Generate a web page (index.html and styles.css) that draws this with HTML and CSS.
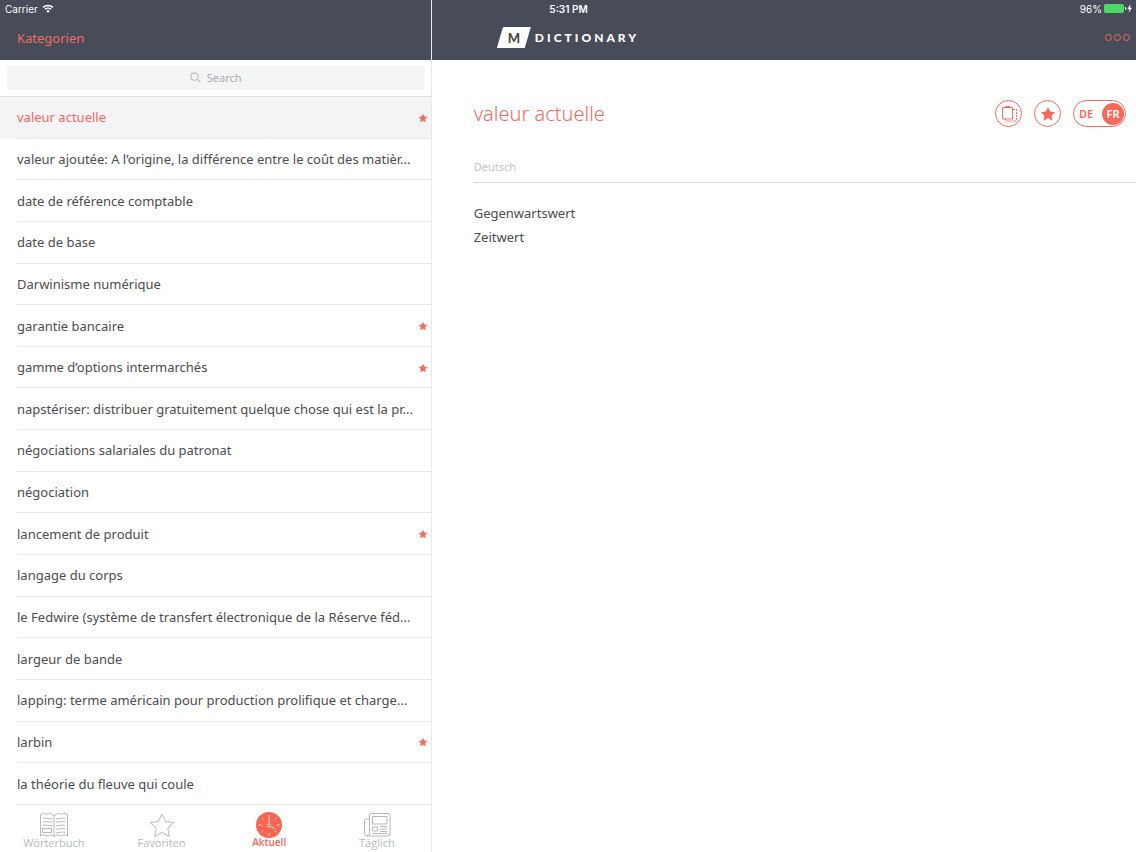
FILE: index.html
```html
<!DOCTYPE html>
<html lang="fr">
<head>
    <meta charset="UTF-8">
    <meta name="viewport" content="width=device-width, initial-scale=1.0">
    <title>M Dictionary</title>
    <link rel="stylesheet" href="styles.css">
</head>
<body>

    <!-- Shared star shape -->
    <svg class="defs" aria-hidden="true">
        <symbol id="star" viewBox="0 0 24 24">
            <path d="M12 1.5l3.2 6.900 7.500.9-5.500 5.200 1.400 7.500L12 18.300 5.400 22l1.400-7.500L1.300 9.300l7.500-.9z"/>
        </symbol>
    </svg>

    <div class="app">

        <!-- Sidebar -->
        <aside class="sidebar">
            <div class="pane-head"></div>
            <div class="search">
                <label class="search-box">
                    <svg class="search-icon" viewBox="0 0 12 12"><circle cx="5" cy="5" r="4.200"/><path d="M8 8l3.400 3.400"/></svg>
                    <input type="text" placeholder="Search" aria-label="Search">
                </label>
            </div>

            <ul class="words">
                <li class="active"><a href="#">valeur actuelle</a><svg class="fav"><use href="#star"/></svg></li>
                <li><a href="#">valeur ajoutée: A l’origine, la différence entre le coût des matièr...</a></li>
                <li><a href="#">date de référence comptable</a></li>
                <li><a href="#">date de base</a></li>
                <li><a href="#">Darwinisme numérique</a></li>
                <li><a href="#">garantie bancaire</a><svg class="fav"><use href="#star"/></svg></li>
                <li><a href="#">gamme d’options intermarchés</a><svg class="fav"><use href="#star"/></svg></li>
                <li><a href="#">napstériser: distribuer gratuitement quelque chose qui est la pr...</a></li>
                <li><a href="#">négociations salariales du patronat</a></li>
                <li><a href="#">négociation</a></li>
                <li><a href="#">lancement de produit</a><svg class="fav"><use href="#star"/></svg></li>
                <li><a href="#">langage du corps</a></li>
                <li><a href="#">le Fedwire (système de transfert électronique de la Réserve féd...</a></li>
                <li><a href="#">largeur de bande</a></li>
                <li><a href="#">lapping: terme américain pour production prolifique et charge...</a></li>
                <li><a href="#">larbin</a><svg class="fav"><use href="#star"/></svg></li>
                <li><a href="#">la théorie du fleuve qui coule</a></li>
            </ul>

            <!-- Tabs -->
            <nav class="tabs">
                <a href="#">
                    <svg viewBox="0 0 30 26">
                        <path d="M15 4C12.500 1 9.500 1 8 2.500 6 1 3.500 1 1.500 2.500V24c2-1.500 4.500-1.500 6.500 0 2-1.500 5-1.500 7 .5 2-2 5-2 7-.5 2-1.500 4.500-1.500 6.500 0V2.500c-2-1.500-4.500-1.500-6.500 0C20.500 1 17.500 1 15 4zM15 4v20.500"/>
                        <path d="M4 6.500c3-1.500 5 1 9 0M4 10c3-1.500 5 1 9 0M4 13.500c3-1.500 5 1 9 0M17 6.500c4 1 6-1.500 9 0M17 10c4 1 6-1.500 9 0M17 13.500c4 1 6-1.500 9 0M17 17c4 1 6-1.500 9 0M17 20.500c4 1 6-1.500 9 0M3.500 16.500h9v4h-9z"/>
                    </svg>
                    <span>Wörterbuch</span>
                </a>
                <a href="#">
                    <svg viewBox="0 0 30 26"><path d="M15 2l3.600 7.500 8.200 1-6 5.700 1.500 8.200L15 20.400l-7.300 4 1.500-8.200-6-5.700 8.200-1z"/></svg>
                    <span>Favoriten</span>
                </a>
                <a href="#" class="current">
                    <svg viewBox="0 0 30 26">
                        <circle class="face" cx="15" cy="13" r="13"/>
                        <path class="hand" d="M15 3v9M16.200 14.200l5.300 2.800"/>
                        <circle class="hand" cx="15" cy="13.500" r="1.500"/>
                        <path class="hand" d="M15 21v3M4.500 13h3M22.500 13h3M7.500 5.500l2 2M22.500 5.500l-2 2M7.500 20.500l2-2M22.500 20.500l-2-2"/>
                    </svg>
                    <span>Aktuell</span>
                </a>
                <a href="#">
                    <svg viewBox="0 0 30 26">
                        <path d="M7.500 21V3.500a2 2 0 0 1 2-2H26a2 2 0 0 1 2 2V22a2 2 0 0 1-2 2H5a2.500 2.500 0 0 1-2.500-2.500V9a2 2 0 0 1 2-2h3M7.500 20.500c0 2-1 3.500-2.500 3.500"/>
                        <path d="M10.500 4.500h14.500v7.500H10.500zM10.500 15h5v4h-5zM18 14.500h7M18 17h7M18 19.500h7M10.500 21.500H25"/>
                    </svg>
                    <span>Täglich</span>
                </a>
            </nav>
        </aside>

        <!-- Detail -->
        <main class="detail">
            <div class="pane-head"></div>
            <div class="entry-head">
                <h1>valeur actuelle</h1>
                <div class="actions">
                    <button class="round" aria-label="Copy">
                        <svg viewBox="0 0 25 25" class="copy-icon">
                            <path d="M6.500 6.500h10v11.500h-10zM9.500 6.500v-1h4v1"/>
                            <path class="dashed" d="M17 8.500h3.500v11.500H9.500v-2"/>
                        </svg>
                    </button>
                    <button class="round" aria-label="Favorite"><svg class="star-icon"><use href="#star"/></svg></button>
                    <div class="lang">
                        <button>DE</button>
                        <button class="on">FR</button>
                    </div>
                </div>
            </div>
            <section class="translation">
                <h2>Deutsch</h2>
                <p>Gegenwartswert</p>
                <p>Zeitwert</p>
            </section>
        </main>

        <!-- Status bar -->
        <div class="status">
            <span class="carrier">Carrier
                <svg class="wifi" viewBox="0 0 12 9"><path d="M1 3.400a7.300 7.300 0 0 1 10 0M3 5.400a4.400 4.400 0 0 1 6 0"/><circle cx="6" cy="7.300" r="1.200"/></svg>
            </span>
            <span class="time">5:31 PM</span>
            <span class="battery">96%
                <svg viewBox="0 0 28 9">
                    <rect class="level" x="0" y="0" width="20" height="9" rx="2"/>
                    <path class="cap" d="M21 3c1 0 1.500.6 1.500 1.500S22 6 21 6z"/>
                    <path class="bolt" d="M26.500 0l-3 5h2l-1 4 3.500-5.200h-2z"/>
                </svg>
            </span>
        </div>

        <!-- Navigation bar -->
        <header class="navbar">
            <a href="#" class="back">Kategorien</a>
            <div class="logo"><span class="mark"><b>M</b></span><span class="name">DICTIONARY</span></div>
            <button class="more" aria-label="More"><i></i><i></i><i></i></button>
        </header>

    </div>

</body>
</html>
```
FILE: styles.css
```css
:root {
    --bar: #484c59;
    --accent: #f26a60;
    --text: #4c4c50;
    --muted: #b4b8bf;
    --line: #e9e8ec;
}

* {
    margin: 0;
    padding: 0;
    box-sizing: border-box;
}

body {
    background: #fff;
    color: var(--text);
    font-family: "Noto Sans", "Open Sans", sans-serif;
    font-size: 13px;
}

a {
    color: inherit;
    text-decoration: none;
}

button {
    border: none;
    background: none;
    color: var(--accent);
    font: inherit;
    cursor: pointer;
}

.defs {
    display: block;
    width: 0;
    height: 0;
}

/* The two bars share grid cells with the panes below them */
.app {
    display: grid;
    grid-template-columns: 38% 1fr;
    grid-template-rows: 17px 43px 1fr;
    min-height: 100vh;
}

.sidebar {
    grid-column: 1;
    grid-row: 1 / -1;
    display: flex;
    flex-direction: column;
    border-right: 1px solid var(--line);
    min-width: 0;
}

.detail {
    grid-column: 2;
    grid-row: 1 / -1;
}

.pane-head {
    height: 60px;
    background: var(--bar);
}

/* Status bar */
.status {
    grid-column: 1 / -1;
    grid-row: 1;
    display: grid;
    grid-template-columns: 1fr auto 1fr;
    align-items: center;
    padding: 0 4px 0 5px;
    color: #fff;
    font-family: Inter, sans-serif;
    font-size: 10px;
}

.carrier, .battery {
    display: flex;
    align-items: center;
    gap: 4px;
}

.battery {
    justify-content: flex-end;
    gap: 2px;
}

.time {
    font-weight: 600;
}

.wifi {
    width: 12px;
    height: 9px;
    fill: none;
    stroke: #fff;
    stroke-width: 1.5;
}

.wifi circle {
    fill: #fff;
    stroke: none;
}

.battery svg {
    width: 28px;
    height: 9px;
    fill: #fff;
}

.battery .level {
    fill: #4cd964;
}

/* Navigation bar */
.navbar {
    grid-column: 1 / -1;
    grid-row: 2;
    display: grid;
    grid-template-columns: 1fr auto 1fr;
    align-items: center;
    padding: 0 6px 2px 17px;
}

.back {
    color: var(--accent);
}

.logo {
    display: flex;
    align-items: center;
    justify-self: center;
    gap: 4px;
    margin-right: 11px;
    color: #fff;
    font-family: Lato, sans-serif;
    font-size: 12px;
    font-weight: 900;
}

.mark {
    display: flex;
    align-items: center;
    justify-content: center;
    width: 34px;
    height: 21px;
    background: #fff;
    color: #4a4a4c;
    font-size: 13px;
    clip-path: polygon(18% 0, 100% 0, 82% 100%, 0 100%);
}

.mark b {
    font-weight: 900;
}

.name {
    letter-spacing: 3px;
}

.more {
    display: flex;
    justify-self: end;
    gap: 2px;
}

.more i {
    width: 7px;
    height: 7px;
    border: 1px solid var(--accent);
    border-radius: 50%;
}

/* Search */
.search {
    padding: 6px 6px 6px 7px;
    border-bottom: 1px solid #dedde1;
}

.search-box {
    display: flex;
    align-items: center;
    justify-content: center;
    gap: 6px;
    height: 24px;
    padding-bottom: 1px;
    border-radius: 3px;
    background: #f4f5f5;
}

.search-icon {
    width: 11px;
    height: 11px;
    fill: none;
    stroke: #a9adb2;
}

.search input {
    width: 35px;
    border: none;
    outline: none;
    background: none;
    color: var(--text);
    font: inherit;
    font-size: 11px;
}

.search input::placeholder {
    color: #a9adb2;
}

/* Word list */
.words {
    flex: 1;
    display: flex;
    flex-direction: column;
    list-style: none;
}

.words li {
    flex: 1;
    display: flex;
    align-items: center;
    min-height: 40px;
    padding-right: 3px;
    padding-left: 17px;
    background: linear-gradient(var(--line), var(--line)) 17px 100% / 100% 1px no-repeat;
}

.words li.active {
    background-color: #f4f3f5;
    color: var(--accent);
}

.words a {
    flex: 1;
    padding-bottom: 1px;
    white-space: nowrap;
}

.fav {
    width: 10px;
    height: 10px;
    fill: var(--accent);
}

/* Tabs */
.tabs {
    display: flex;
    height: 47px;
    padding-top: 7px;
}

.tabs a {
    flex: 1;
    display: flex;
    flex-direction: column;
    align-items: center;
    color: var(--muted);
    font-family: "Open Sans", sans-serif;
    font-size: 11px;
    line-height: 9px;
}

.tabs svg {
    width: 30px;
    height: 26px;
    fill: none;
    stroke: currentColor;
}

.tabs .current {
    color: var(--accent);
    font-size: 10px;
    font-weight: 600;
}

.tabs .face {
    fill: #fa6450;
    stroke: none;
}

.tabs .hand {
    stroke: #ffe3df;
}

/* Detail */
.entry-head {
    display: flex;
    align-items: center;
    justify-content: space-between;
    padding: 40px 10px 0 42px;
}

.entry-head h1 {
    color: var(--accent);
    font-size: 20px;
    font-weight: 300;
    line-height: 27px;
}

.actions {
    display: flex;
    gap: 12px;
}

.round {
    display: flex;
    align-items: center;
    justify-content: center;
    width: 27px;
    height: 27px;
    border: 1px solid var(--accent);
    border-radius: 50%;
}

.copy-icon {
    flex: none;
    width: 25px;
    height: 25px;
    fill: none;
    stroke: var(--accent);
}

.copy-icon .dashed {
    stroke-dasharray: 2 1;
}

.star-icon {
    flex: none;
    width: 16px;
    height: 16px;
    fill: var(--accent);
}

.lang {
    display: flex;
    align-items: center;
    height: 27px;
    padding: 0 1px;
    border: 1px solid var(--accent);
    border-radius: 14px;
}

.lang button {
    width: 22px;
    height: 22px;
    border-radius: 50%;
    font-size: 11px;
    font-weight: 600;
}

.lang .on {
    margin-left: 5px;
    background: var(--accent);
    color: #fff;
}

.translation {
    padding-left: 42px;
}

.translation h2 {
    margin: 30px 0 18px;
    padding-bottom: 5px;
    border-bottom: 1px solid #dcdcdf;
    color: #c2c3c7;
    font-size: 11px;
    font-weight: 400;
    line-height: 20px;
}

.translation p {
    line-height: 24px;
}
```
